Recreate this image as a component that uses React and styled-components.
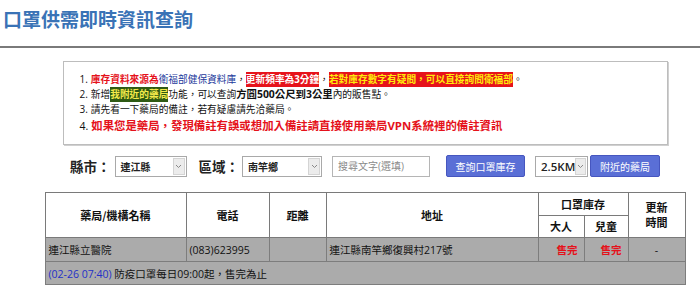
import styled, { createGlobalStyle } from "styled-components";

const GlobalStyle = createGlobalStyle`
  body {
    margin: 0;
    background: #fff;
    font-family: "Open Sans", "Noto Sans CJK TC", sans-serif;
    color: #111;
  }
`;

const Title = styled.h1`
  margin: 0;
  padding: 6px 0 14px 3px;
  font-size: 19px;
  line-height: 26px;
  font-weight: 700;
  color: #3a73b6;
  font-family: "Noto Sans CJK TC", sans-serif;
  border-bottom: 2px solid #7a7a7a;
`;

const Content = styled.main`
  padding-left: 30px;
`;

const Notice = styled.div`
  box-sizing: border-box;
  width: 605px;
  margin: 13px auto 0;
  padding: 10px 16px 9px;
  border: 1px solid #bdbdbd;
  box-shadow: 1px 1px 0 #d0d0d0;
`;

const Line = styled.div`
  font-size: ${(p) => p.$size || 9.7}px;
  line-height: ${(p) => (p.$size ? 17 : 14)}px;
  white-space: nowrap;
  font-family: "Open Sans", "Noto Sans CJK TC", sans-serif;
`;

const Num = styled.span`
  font-size: ${(p) => p.$size || 10}px;
  margin-right: 3px;
  color: #111;
`;

const Red = styled.span`
  color: #e5121b;
  font-weight: 700;
`;

const Blue = styled.span`
  color: #1d3a9c;
`;

const Bold = styled.span`
  font-weight: 700;
  font-size: 10.4px;
`;

const Mark = styled.span`
  background: ${(p) => p.$bg};
  color: ${(p) => p.$fg};
  font-weight: 700;
  padding: 1px 0;
`;

const Controls = styled.div`
  display: flex;
  align-items: center;
  justify-content: center;
  height: 22px;
  margin-top: 10px;
`;

const Label = styled.span`
  font-family: "Noto Sans CJK TC", sans-serif;
  font-size: 13.5px;
  font-weight: 700;
  margin-right: ${(p) => p.$gap || 4}px;
  color: #222;
`;

const FakeSelect = styled.div`
  box-sizing: border-box;
  width: ${(p) => p.$w}px;
  height: 21px;
  margin-right: ${(p) => p.$mr || 0}px;
  display: flex;
  align-items: center;
  justify-content: space-between;
  border: 1px solid #a9a9a9;
  background: #fff;
  padding: 1px 1px 1px 5px;
`;

const SelectText = styled.span`
  font-size: ${(p) => p.$size || 10}px;
  font-weight: ${(p) => p.$weight || 700};
  color: #222;
`;

const ArrowBox = styled.span`
  box-sizing: border-box;
  width: 12px;
  height: 17px;
  display: flex;
  align-items: center;
  justify-content: center;
  background: #ececec;
  border: 1px solid #d4d4d4;
`;

const SearchInput = styled.input`
  box-sizing: border-box;
  width: 98px;
  height: 21px;
  margin-right: 16px;
  padding: 0 5px;
  border: 1px solid #b5b5b5;
  font-size: 10px;
  font-family: "Open Sans", "Noto Sans CJK TC", sans-serif;
  &::placeholder {
    color: #8a8a8a;
  }
`;

const ActionButton = styled.button`
  box-sizing: border-box;
  width: ${(p) => p.$w}px;
  height: 22px;
  margin-right: ${(p) => p.$mr || 0}px;
  padding: 0;
  border: 1px solid #4656bf;
  border-radius: 2px;
  background: #5a6fd6;
  color: #fff;
  font-size: 10px;
  font-family: "Noto Sans CJK TC", sans-serif;
`;

const Table = styled.table`
  width: 640px;
  margin: 15px auto 0;
  border-collapse: collapse;
  table-layout: fixed;
  border: 1px solid #6e6e6e;
  font-size: 10.5px;
`;

const Th = styled.th`
  background: #fff;
  border: 1px solid #7a7a7a;
  font-weight: 700;
  font-size: 11px;
  line-height: 15px;
  font-family: "Noto Sans CJK TC", sans-serif;
  padding: 0;
`;

const HeadRow = styled.tr`
  height: ${(p) => p.$h}px;
`;

const DataRow = styled.tr`
  height: ${(p) => p.$h}px;
  background: #ababab;
`;

const Td = styled.td`
  border: 1px solid #7d7d7d;
  padding: 0 ${(p) => (p.$align === "right" ? 6 : 3)}px;
  text-align: ${(p) => p.$align || "left"};
  color: ${(p) => p.$color || "#111"};
  font-weight: ${(p) => (p.$bold ? 700 : 400)};
  white-space: nowrap;
`;

const Time = styled.span`
  color: #2330c8;
`;

const Chevron = () => (
  <svg width="7" height="5" viewBox="0 0 7 5">
    <path d="M1 1 L3.5 3.5 L6 1" fill="none" stroke="#888" strokeWidth="1" />
  </svg>
);

const Select = ({ w, mr, text, size, weight }) => (
  <FakeSelect $w={w} $mr={mr}>
    <SelectText $size={size} $weight={weight}>{text}</SelectText>
    <ArrowBox>
      <Chevron />
    </ArrowBox>
  </FakeSelect>
);

export default function App() {
  return (
    <>
      <GlobalStyle />
      <Title>口罩供需即時資訊查詢</Title>
      <Content>
        <Notice>
          <Line>
            <Num>1.</Num>
            <Red>庫存資料來源為</Red>
            <Blue>衛福部健保資料庫</Blue>，
            <Mark $bg="#e6131b" $fg="#fff">更新頻率為3分鐘</Mark>，
            <Mark $bg="#e6131b" $fg="#ffe90a">若對庫存數字有疑問，可以直接詢問衛福部</Mark>。
          </Line>
          <Line>
            <Num>2.</Num>新增
            <Mark $bg="#2f5a14" $fg="#f4ea4a">我附近的藥局</Mark>功能，可以查詢
            <Bold>方圓500公尺到3公里</Bold>內的販售點。
          </Line>
          <Line>
            <Num>3.</Num>請先看一下藥局的備註，若有疑慮請先洽藥局。
          </Line>
          <Line $size={11.4}>
            <Num $size={10.5}>4.</Num>
            <Red>如果您是藥局，發現備註有誤或想加入備註請直接使用藥局VPN系統裡的備註資訊</Red>
          </Line>
        </Notice>

        <Controls>
          <Label>縣市：</Label>
          <Select w={72} mr={12} text="連江縣" />
          <Label $gap={3}>區域：</Label>
          <Select w={80} mr={10} text="南竿鄉" />
          <SearchInput placeholder="搜尋文字(選填)" />
          <ActionButton $w={79} $mr={10}>查詢口罩庫存</ActionButton>
          <Select w={53} mr={2} text="2.5KM" size={11.5} weight={600} />
          <ActionButton $w={70}>附近的藥局</ActionButton>
        </Controls>

        <Table>
          <colgroup>
            <col style={{ width: 141 }} />
            <col style={{ width: 83 }} />
            <col style={{ width: 57 }} />
            <col style={{ width: 212 }} />
            <col style={{ width: 46 }} />
            <col style={{ width: 44 }} />
            <col style={{ width: 57 }} />
          </colgroup>
          <thead>
            <HeadRow $h={23}>
              <Th rowSpan={2}>藥局/機構名稱</Th>
              <Th rowSpan={2}>電話</Th>
              <Th rowSpan={2}>距離</Th>
              <Th rowSpan={2}>地址</Th>
              <Th colSpan={2}>口罩庫存</Th>
              <Th rowSpan={2}>
                更新
                <br />
                時間
              </Th>
            </HeadRow>
            <HeadRow $h={22}>
              <Th>大人</Th>
              <Th>兒童</Th>
            </HeadRow>
          </thead>
          <tbody>
            <DataRow $h={24}>
              <Td>連江縣立醫院</Td>
              <Td>(083)623995</Td>
              <Td />
              <Td>連江縣南竿鄉復興村217號</Td>
              <Td $align="right" $color="#e5121b" $bold>售完</Td>
              <Td $align="right" $color="#e5121b" $bold>售完</Td>
              <Td $align="center">-</Td>
            </DataRow>
            <DataRow $h={23}>
              <Td colSpan={7}>
                <Time>(02-26 07:40)</Time> 防疫口罩每日09:00起，售完為止
              </Td>
            </DataRow>
          </tbody>
        </Table>
      </Content>
    </>
  );
}
